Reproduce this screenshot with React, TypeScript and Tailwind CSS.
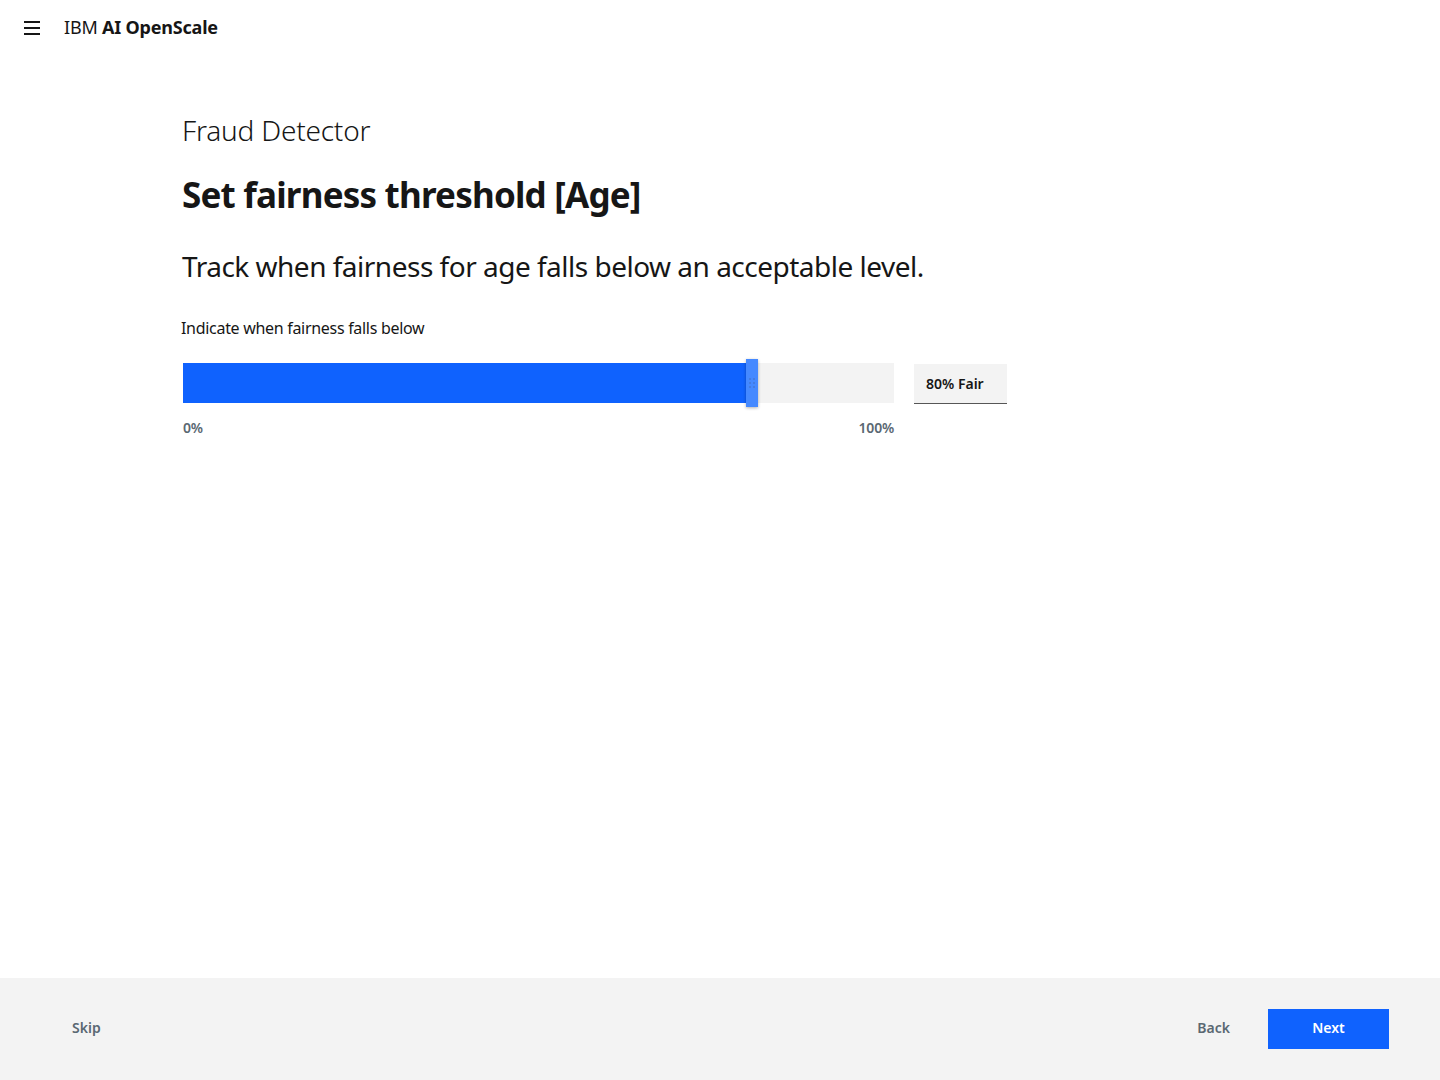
const FONT = { fontFamily: '"Noto Sans", "Open Sans", sans-serif' };

function Hamburger() {
  return (
    <svg width="18" height="16" viewBox="0 0 18 16" className="block">
      <rect x="1" y="1" width="16" height="2" fill="#161616" />
      <rect x="1" y="7" width="16" height="2" fill="#161616" />
      <rect x="1" y="13" width="16" height="2" fill="#161616" />
    </svg>
  );
}

function Slider({ value }: { value: number }) {
  return (
    <div className="relative w-[711px] h-10 bg-[#f3f3f3]">
      <div className="h-full bg-[#0f62fe]" style={{ width: `${value}%` }} />
      <div
        className="absolute top-[-4px] w-3 h-12 bg-[#4589ff] shadow-[0_1px_3px_rgba(0,0,0,0.3)] flex items-center justify-center"
        style={{ left: `calc(${value}% - 6px)` }}
      >
        <svg width="6" height="10" viewBox="0 0 6 10">
          {[1, 5, 9].map((y) => (
            <g key={y}>
              <rect x="0.5" y={y - 0.5} width="1" height="1" fill="#3d5a8a" />
              <rect x="4.5" y={y - 0.5} width="1" height="1" fill="#3d5a8a" />
            </g>
          ))}
        </svg>
      </div>
    </div>
  );
}

export default function App() {
  return (
    <div className="min-h-screen flex flex-col bg-white text-[#161616]" style={FONT}>
      {/* Header */}
      <header className="h-14 flex items-center pl-[23px] gap-[23px]">
        <Hamburger />
        <div className="text-[18px] tracking-[-0.2px] -mt-0.5">
          IBM <span className="font-bold">AI OpenScale</span>
        </div>
      </header>

      {/* Content */}
      <main className="flex-1 pl-[182px] pt-[56px]">
        <h2 className="text-[28px] font-light leading-9 tracking-[-0.2px]">Fraud Detector</h2>
        <h1 className="mt-[24px] text-[35px] font-bold leading-[46px] tracking-[-0.8px]">
          Set fairness threshold [Age]
        </h1>
        <p className="mt-[30px] text-[28px] leading-9 tracking-[-0.5px]">
          Track when fairness for age falls below an acceptable level.
        </p>

        <div className="mt-[32px] -ml-px text-[16px] tracking-[-0.3px]">Indicate when fairness falls below</div>

        <div className="mt-[23px] flex items-start gap-5 ml-px">
          <div className="flex flex-col">
            <Slider value={80} />
            <div className="mt-[14px] flex justify-between text-[14px] font-semibold text-[#5a6872] tracking-[-0.2px]">
              <span>0%</span>
              <span>100%</span>
            </div>
          </div>
          <div className="mt-px w-[93px] h-10 bg-[#f3f3f3] border-b border-[#565656] flex items-center pl-3 text-[14px] font-semibold">
            80% Fair
          </div>
        </div>
      </main>

      {/* Footer */}
      <footer className="h-[102px] bg-[#f3f3f3] flex items-center justify-between pl-[72px] pr-[51px]">
        <button className="text-[14px] font-semibold text-[#5a6872] leading-[16px] -mt-0.5">Skip</button>
        <div className="flex items-center gap-[38px]">
          <button className="text-[14px] font-semibold text-[#5a6872] leading-[16px] -mt-0.5">Back</button>
          <button className="w-[121px] h-10 bg-[#0f62fe] text-white text-[14px] font-semibold leading-[16px] pb-0.5">
            Next
          </button>
        </div>
      </footer>
    </div>
  );
}
